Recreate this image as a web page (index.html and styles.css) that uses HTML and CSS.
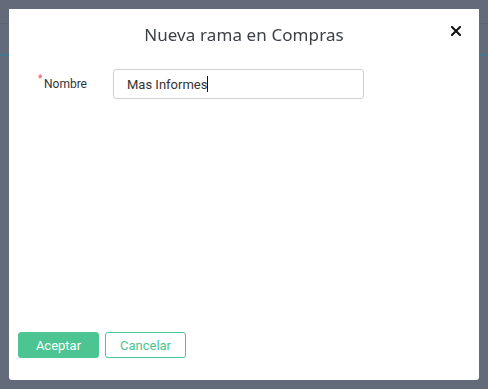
FILE: index.html
```html
<!DOCTYPE html>
<html lang="es">
<head>
<meta charset="utf-8">
<link rel="stylesheet" href="styles.css">
</head>
<body>
<div class="page">
  <div class="page-band"></div>
  <div class="page-line"></div>
</div>
<div class="overlay">
  <div class="modal">
    <div class="modal-header">
      <h2 class="modal-title">Nueva rama en Compras</h2>
      <button class="close" aria-label="Cerrar">
        <svg width="10" height="10" viewBox="0 0 10 10"><path d="M1 1L9 9M9 1L1 9" stroke="#111" stroke-width="2" stroke-linecap="square"/></svg>
      </button>
    </div>
    <div class="modal-body">
      <div class="field">
        <label class="label"><span class="req">*</span>Nombre</label>
        <div class="input">Mas Informes<span class="caret"></span></div>
      </div>
    </div>
    <div class="modal-footer">
      <button class="btn btn-primary">Aceptar</button>
      <button class="btn btn-outline">Cancelar</button>
    </div>
  </div>
</div>
</body>
</html>
```
FILE: styles.css
```css
html, body {
  margin: 0;
  padding: 0;
  height: 100%;
}
body {
  background: #636b7a;
  font-family: Roboto, "Liberation Sans", sans-serif;
  overflow: hidden;
}
.page {
  height: 100%;
}
.page-band {
  height: 23px;
  border-bottom: 1px solid #5d6574;
}
.page-line {
  margin-top: 30px;
  height: 2px;
  background: #3f7890;
}
.overlay {
  position: fixed;
  inset: 0;
  padding: 9px;
  display: flex;
}
.modal {
  width: 470px;
  height: 371px;
  background: #fff;
  border-radius: 0 0 3px 3px;
  display: flex;
  flex-direction: column;
}
.modal-header {
  position: relative;
  height: 51px;
  display: flex;
  justify-content: center;
  align-items: flex-start;
}
.modal-title {
  margin: 15px 0 0 0;
  font-family: "Noto Sans", "Open Sans", sans-serif;
  font-weight: 400;
  font-size: 17px;
  letter-spacing: 0.1px;
  color: #3a3f48;
  line-height: 22px;
}
.close {
  position: absolute;
  top: 17px;
  right: 18px;
  width: 10px;
  height: 10px;
  padding: 0;
  border: 0;
  background: none;
  display: block;
}
.close svg {
  display: block;
}
.modal-body {
  flex: 1;
  padding: 9px 0 0 29px;
}
.field {
  display: flex;
  align-items: center;
}
.label {
  width: 75px;
  font-size: 12px;
  color: #2f333a;
  position: relative;
  padding-left: 6px;
  box-sizing: border-box;
}
.req {
  position: absolute;
  left: 0;
  top: -4px;
  color: #e64545;
  font-size: 10px;
}
.input {
  width: 251px;
  height: 30px;
  box-sizing: border-box;
  border: 1px solid #cfcfcf;
  border-radius: 3px;
  padding: 0 13px;
  display: flex;
  align-items: center;
  font-size: 13px;
  color: #333;
}
.caret {
  display: inline-block;
  width: 1px;
  height: 16px;
  background: #111;
}
.modal-footer {
  display: flex;
  gap: 6px;
  padding: 0 0 22px 9px;
}
.btn {
  width: 81px;
  height: 26px;
  box-sizing: border-box;
  border-radius: 3px;
  font-family: Roboto, "Liberation Sans", sans-serif;
  font-size: 13px;
  padding: 0;
  cursor: pointer;
}
.btn-primary {
  background: #4cc592;
  border: 1px solid #4cc592;
  color: #fff;
}
.btn-outline {
  background: #fff;
  border: 1px solid #4cc592;
  color: #4cc592;
}
```
